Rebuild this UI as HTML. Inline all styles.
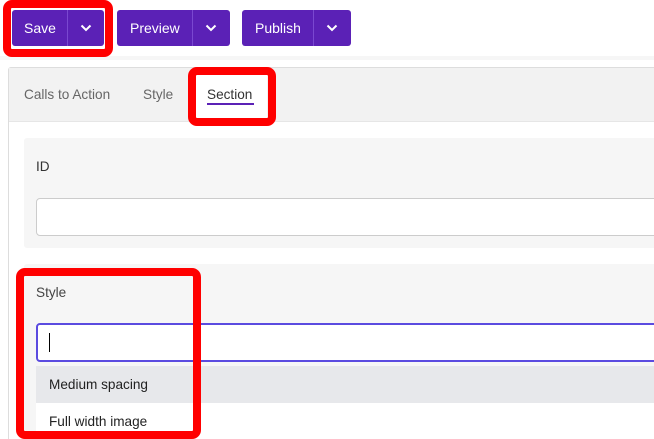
<!DOCTYPE html>
<html style="overflow:hidden;height:439px"><head><style>
*{box-sizing:border-box;margin:0;padding:0}
body{width:654px;height:439px;overflow:hidden;background:#fff;font-family:"Liberation Sans",sans-serif;position:relative;color:#333}
.a{position:absolute}
.btn{position:absolute;top:10px;height:36px;background:#5b21b6;border-radius:3px;color:#fff;font-size:14px}
.btn span{position:absolute;top:10px}
.btn i{position:absolute;top:0;bottom:0;width:1px;background:#7a48d0}
.chev{position:absolute;top:14px}
.red{position:absolute;border:8px solid #f00;border-radius:9px}
.t{font-size:13.6px}
</style></head><body>
<div class="a" style="left:0;top:56px;width:654px;height:4px;background:#f6f6f6"></div>
<div class="btn" style="left:12px;width:92px"><span style="left:12px">Save</span><i style="left:55px"></i><svg class="chev" style="left:68px" width="12" height="8"><path d="M1.5 1.5L6 6L10.5 1.5" stroke="#fff" stroke-width="2" fill="none"/></svg></div>
<div class="btn" style="left:117px;width:113px"><span style="left:13px">Preview</span><i style="left:75px"></i><svg class="chev" style="left:88px" width="12" height="8"><path d="M1.5 1.5L6 6L10.5 1.5" stroke="#fff" stroke-width="2" fill="none"/></svg></div>
<div class="btn" style="left:242px;width:109px"><span style="left:13px">Publish</span><i style="left:71px"></i><svg class="chev" style="left:84px" width="12" height="8"><path d="M1.5 1.5L6 6L10.5 1.5" stroke="#fff" stroke-width="2" fill="none"/></svg></div>
<div class="red" style="left:3px;top:0;width:110px;height:57px"></div>

<div class="a" style="left:8px;top:67px;width:660px;height:372px;border:1px solid #ddd;border-bottom:none;border-radius:3px 3px 0 0;background:#fff"></div>
<div class="a" style="left:9px;top:68px;width:650px;height:54px;background:#f2f2f2;border-bottom:1px solid #e6e6e6"></div>
<div class="a t" style="left:24px;top:87px;color:#666">Calls to Action</div>
<div class="a t" style="left:143px;top:87px;color:#666">Style</div>
<div class="a" style="left:196px;top:75px;width:71px;height:43px;background:#fff"></div>
<div class="a t" style="left:207px;top:87px;color:#333">Section</div>
<div class="a" style="left:207px;top:103px;width:47px;height:2px;background:#5b21b6"></div>
<div class="red" style="left:188px;top:67px;width:88px;height:59px"></div>

<div class="a" style="left:24px;top:138px;width:640px;height:110px;background:#f6f6f6;border-radius:3px"></div>
<div class="a t" style="left:36px;top:159px">ID</div>
<div class="a" style="left:36px;top:198px;width:630px;height:38px;background:#fff;border:1px solid #ccc;border-radius:4px"></div>

<div class="a" style="left:24px;top:264px;width:640px;height:175px;background:#f6f6f6;border-radius:3px"></div>
<div class="a t" style="left:36px;top:285px;color:#444">Style</div>
<div class="a" style="left:36px;top:323px;width:630px;height:39px;background:#fff;border:2px solid #5b4be0;border-radius:4px"></div>
<div class="a" style="left:49px;top:333px;width:1px;height:19px;background:#000"></div>
<div class="a" style="left:36px;top:366px;width:630px;height:37px;background:#e7e8eb"></div>
<div class="a" style="left:36px;top:403px;width:630px;height:36px;background:#fff"></div>
<div class="a t" style="left:49px;top:377px;color:#222">Medium spacing</div>
<div class="a t" style="left:49px;top:414px;color:#222">Full width image</div>
<div class="red" style="left:16px;top:268px;width:185px;height:171px"></div>
</body></html>
